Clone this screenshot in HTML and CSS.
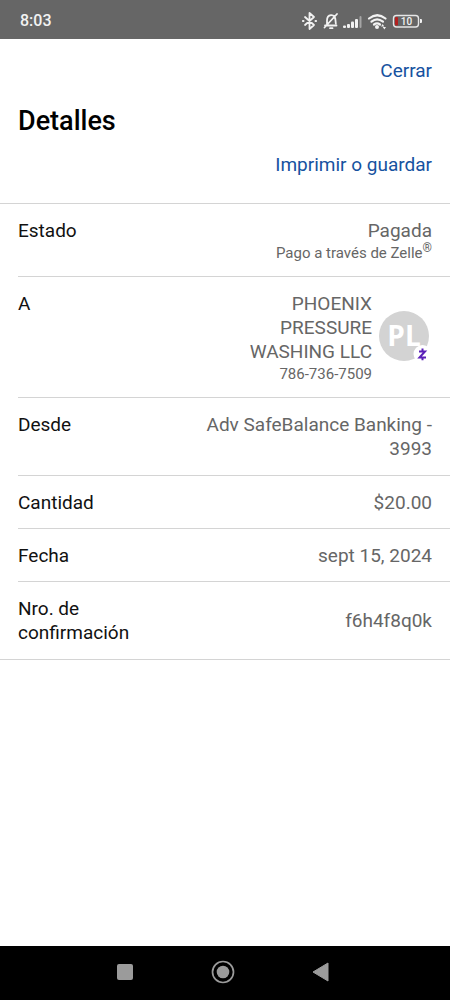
FILE: index.html
```html
<!DOCTYPE html>
<html lang="es">
<head>
<meta charset="utf-8">
<meta name="viewport" content="width=device-width, initial-scale=1">
<title>Detalles</title>
<link rel="stylesheet" href="styles.css">
</head>
<body>
<div class="screen">
  <header class="status">
    <span class="status__time">8:03</span>
    <svg class="status__icons" viewBox="0 0 122 22" role="img" aria-label="Bluetooth, silencio, señal, wifi, batería 10">
      <g fill="none" stroke="#f2f2f2" stroke-width="1.800" stroke-linejoin="round" stroke-linecap="round">
        <path d="M4 7l9 8-4.500 4V3l4.500 4-9 8"/>
        <path d="M2 11h.4M14.600 11h.4" stroke-width="2.200"/>
        <path d="M24 15.500h11.500M26 15v-4.500c0-3 1.500-5 4-5.300c3-.2 4.500 2.300 4.500 5.300l.3 3M23.500 17.500L36 4M29 18.200h2.500"/>
      </g>
      <g fill="#f2f2f2">
        <rect x="42" y="15.500" width="3" height="2.500" rx="1"/>
        <rect x="46" y="14" width="3" height="4" rx="1"/>
        <rect x="50" y="11.500" width="3" height="6.500" rx="1"/>
        <rect x="54" y="9" width="3" height="9" rx="1"/>
        <rect x="58.500" y="6" width="2" height="12" rx="1" opacity=".45"/>
        <circle cx="76" cy="17" r="2"/>
        <path d="M80 16.500l1.700-2.500 1.500 2.500zM81.700 17h3.300l-1.600 2.500z"/>
      </g>
      <g fill="none" stroke="#f2f2f2" stroke-width="2.200" stroke-linecap="round">
        <path d="M68 8.500q8.300-6.500 16.500 0M70.500 11.700q5.500-4.500 11.500 0M73 14.500q3-2.200 6 0"/>
      </g>
      <rect x="92.500" y="5.500" width="25" height="11.500" rx="3" fill="none" stroke="#e6e6e6" stroke-width="1.400"/>
      <path d="M119 9h1q1 0 1 1v2q0 1-1 1h-1z" fill="#f2f2f2"/>
      <rect x="94" y="7" width="3" height="8.500" rx="1" fill="#b3201f"/>
      <text x="105.500" y="15" class="status__level">10</text>
    </svg>
  </header>

  <main class="content">
    <div class="toolbar"><button class="action" type="button">Cerrar</button></div>
    <h1 class="title">Detalles</h1>
    <div class="toolbar"><button class="action" type="button">Imprimir o guardar</button></div>

    <dl class="details">
      <div class="row">
        <dt class="row__label">Estado</dt>
        <dd class="row__value">Pagada<small class="row__note">Pago a través de Zelle<sup class="mark">®</sup></small></dd>
      </div>
      <div class="row">
        <dt class="row__label">A</dt>
        <dd class="row__value payee">
          <div>PHOENIX PRESSURE WASHING LLC<small class="row__note">786-736-7509</small></div>
          <svg class="payee__avatar" viewBox="0 0 53 54" role="img" aria-label="PL, Zelle">
            <circle cx="25" cy="25" r="25" fill="#d3d3d3"/>
            <text x="25" y="35" class="payee__initials">PL</text>
            <circle cx="43.500" cy="43" r="9" fill="#fff"/>
            <path d="M40 40.500h6l-5.500 6h6.500M43.500 37.500v2.500M43.500 46.800v2.500" fill="none" stroke="#5a1fb8" stroke-width="2"/>
          </svg>
        </dd>
      </div>
      <div class="row row--tall">
        <dt class="row__label">Desde</dt>
        <dd class="row__value">Adv SafeBalance Banking - 3993</dd>
      </div>
      <div class="row">
        <dt class="row__label">Cantidad</dt>
        <dd class="row__value">$20.00</dd>
      </div>
      <div class="row">
        <dt class="row__label">Fecha</dt>
        <dd class="row__value">sept 15, 2024</dd>
      </div>
      <div class="row row--tall">
        <dt class="row__label">Nro. de confirmación</dt>
        <dd class="row__value row__value--middle">f6h4f8q0k</dd>
      </div>
    </dl>
  </main>

  <nav class="navbar" aria-label="Sistema">
    <button class="navbar__button" type="button" aria-label="Recientes">
      <svg class="navbar__icon" viewBox="0 0 24 24"><rect x="4" y="4" width="16" height="16" rx="2" fill="#9b9b9b"/></svg>
    </button>
    <button class="navbar__button" type="button" aria-label="Inicio">
      <svg class="navbar__icon" viewBox="0 0 24 24"><circle cx="12" cy="12" r="10.500" fill="none" stroke="#9b9b9b" stroke-width="1.700"/><circle cx="12" cy="12" r="6.300" fill="#9b9b9b"/></svg>
    </button>
    <button class="navbar__button" type="button" aria-label="Atrás">
      <svg class="navbar__icon" viewBox="0 0 24 24"><path d="M4 12L19 3v18z" fill="#9b9b9b" stroke="#9b9b9b" stroke-linejoin="round"/></svg>
    </button>
  </nav>
</div>
</body>
</html>
```
FILE: styles.css
```css
* {
  box-sizing: border-box;
}

body {
  margin: 0;
  background: #fff;
  color: #111;
  font: 19px/24px Roboto, sans-serif;
}

.screen {
  display: flex;
  flex-direction: column;
  min-height: 100vh;
}

.status {
  display: flex;
  align-items: center;
  justify-content: space-between;
  padding: 10px 27px 7px 20px;
  background: #666;
  color: #f2f2f2;
}

.status__time {
  font-size: 16px;
  font-weight: 500;
  line-height: 22px;
}

.status__icons {
  width: 122px;
  height: 22px;
}

.status__level {
  fill: #f2f2f2;
  font-size: 10px;
  font-weight: 500;
  text-anchor: middle;
}

.content {
  flex: 1;
  padding-top: 20px;
}

.toolbar {
  display: flex;
  justify-content: flex-end;
  padding: 0 18px;
}

.action {
  padding: 0;
  border: 0;
  background: none;
  color: #1652a0;
  font: inherit;
  cursor: pointer;
}

.title {
  margin: 22px 18px 16px;
  color: #000;
  font-size: 27px;
  font-weight: 500;
  line-height: 32px;
}

.details {
  margin: 26px 0 0;
  padding-left: 18px;
  border-top: 1px solid #d4d4d4;
  border-bottom: 1px solid #d4d4d4;
}

.row {
  display: grid;
  grid-template-columns: 9fr 11fr;
  padding: 15px 18px 13px 0;
}

.row + .row {
  border-top: 1px solid #d4d4d4;
}

.row--tall {
  padding-bottom: 14px;
}

.row__label {
  padding-right: 16px;
}

.row__value {
  margin: 0;
  color: #666;
  text-align: right;
}

.row__value--middle {
  align-self: center;
}

.row__note {
  display: block;
  font-size: 15px;
  line-height: 20px;
}

.mark {
  font-size: 12px;
  line-height: 0;
}

.payee {
  display: flex;
  align-items: center;
  justify-content: flex-end;
  gap: 7px;
}

.payee__avatar {
  flex: none;
  width: 53px;
  height: 54px;
}

.payee__initials {
  fill: #fff;
  font: 700 28px "Open Sans", sans-serif;
  text-anchor: middle;
}

.navbar {
  display: flex;
  justify-content: center;
  gap: 74px;
  padding: 14px 4px 16px 0;
  background: #000;
}

.navbar__button {
  display: flex;
  padding: 0;
  border: 0;
  background: none;
}

.navbar__icon {
  width: 24px;
  height: 24px;
}
```
